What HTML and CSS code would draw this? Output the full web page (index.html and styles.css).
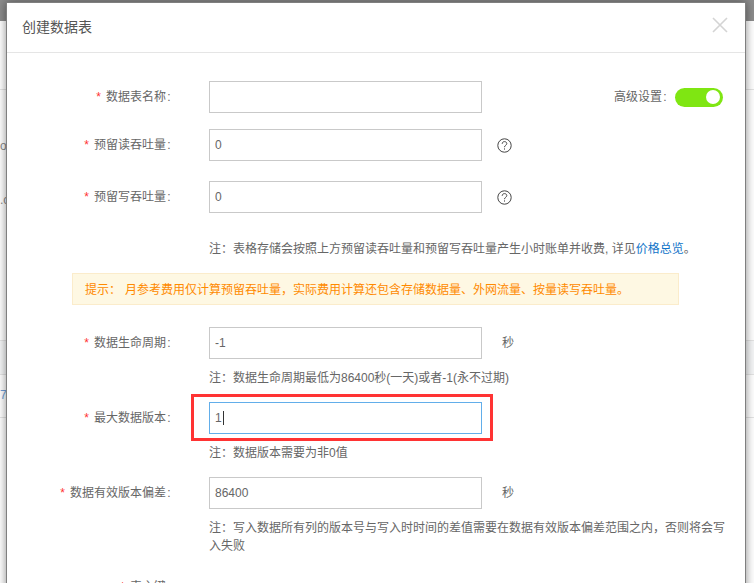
FILE: index.html
```html
<!DOCTYPE html>
<html lang="zh-CN">
<head>
<meta charset="utf-8">
<title>创建数据表</title>
<link rel="stylesheet" href="styles.css">
</head>
<body>
<div class="backdrop">
  <div class="topbar"></div>
  <div class="bg-row bg-first"></div>
  <div class="bg-text bg-or">or</div>
  <div class="bg-text bg-c">.c</div>
  <div class="bg-tint"></div>
  <div class="bg-text bg-link">7c</div>
  <div class="bg-row bg-last"></div>
</div>
<section class="modal">
  <header class="modal-head">
    <h1 class="modal-title">创建数据表</h1>
    <svg class="close" width="16" height="16" viewBox="0 0 16 16"><path d="M1 1 15 15M15 1 1 15" fill="none" stroke="#d4d4d4" stroke-width="1.6"/></svg>
  </header>
  <form class="form">
    <div class="row gap16">
      <label class="label"><i class="req">*</i>数据表名称<span class="colon">:</span></label>
      <input class="field" type="text">
      <div class="advanced">
        <span>高级设置<span class="colon">:</span></span>
        <span class="toggle"><span class="knob"></span></span>
      </div>
    </div>
    <div class="row gap20">
      <label class="label"><i class="req">*</i>预留读吞吐量<span class="colon">:</span></label>
      <input class="field" type="text" value="0">
      <svg class="help" width="15" height="15" viewBox="0 0 15 15"><circle cx="7.5" cy="7.5" r="6.7" fill="none" stroke="#444" stroke-width="1"/><path d="M5.2 5.8C5.2 4.4 6.2 3.6 7.5 3.6S9.8 4.4 9.8 5.6C9.8 7.2 7.5 7.3 7.5 9.2M7.5 10.4V11.6" fill="none" stroke="#444" stroke-width="1"/></svg>
    </div>
    <div class="row gap26">
      <label class="label"><i class="req">*</i>预留写吞吐量<span class="colon">:</span></label>
      <input class="field" type="text" value="0">
      <svg class="help" width="15" height="15" viewBox="0 0 15 15"><circle cx="7.5" cy="7.5" r="6.7" fill="none" stroke="#444" stroke-width="1"/><path d="M5.2 5.8C5.2 4.4 6.2 3.6 7.5 3.6S9.8 4.4 9.8 5.6C9.8 7.2 7.5 7.3 7.5 9.2M7.5 10.4V11.6" fill="none" stroke="#444" stroke-width="1"/></svg>
    </div>
    <p class="note">注&#xFF1A;表格存储会按照上方预留读吞吐量和预留写吞吐量产生小时账单并收费, 详见<a class="link">价格总览</a>。</p>
    <div class="alert"><span class="alert-key">提示&#xFF1A;</span>月参考费用仅计算预留吞吐量&#xFF0C;实际费用计算还包含存储数据量、外网流量、按量读写吞吐量。</div>
    <div class="row gap9">
      <label class="label"><i class="req">*</i>数据生命周期<span class="colon">:</span></label>
      <input class="field" type="text" value="-1">
      <span class="unit">秒</span>
    </div>
    <p class="note">注&#xFF1A;数据生命周期最低为86400秒(一天)或者-1(永不过期)</p>
    <div class="row gap9">
      <label class="label"><i class="req">*</i>最大数据版本<span class="colon">:</span></label>
      <div class="field focused">1<span class="caret"></span></div>
      <div class="highlight"></div>
    </div>
    <p class="note">注&#xFF1A;数据版本需要为非0值</p>
    <div class="row gap9">
      <label class="label"><i class="req">*</i>数据有效版本偏差<span class="colon">:</span></label>
      <input class="field" type="text" value="86400">
      <span class="unit">秒</span>
    </div>
    <p class="note wrap">注&#xFF1A;写入数据所有列的版本号与写入时时间的差值需要在数据有效版本偏差范围之内&#xFF0C;否则将会写入失败</p>
    <div class="row">
      <label class="label"><i class="req">*</i>表主键<span class="colon">:</span></label>
    </div>
  </form>
</section>
</body>
</html>
```
FILE: styles.css
```css
* { box-sizing: border-box; }
html, body { margin: 0; height: 100%; }
body {
  position: relative;
  width: 754px;
  height: 583px;
  overflow: hidden;
  background: #fff;
  font: 12px/18px "Liberation Sans", "Noto Sans CJK SC", sans-serif;
  color: #666;
}
.backdrop { height: 583px; }
.topbar { height: 21px; background: #8c8c8c; }
.bg-row { border-bottom: 1px solid #e4e4e4; }
.bg-first { height: 69px; }
.bg-text { font: 12px/16px "Liberation Sans", sans-serif; color: #888; white-space: nowrap; }
.bg-or { margin-top: 48px; }
.bg-c { margin-top: 38px; }
.bg-tint {
  height: 167px;
  background: linear-gradient(#fff 0 132px, #e4e4e4 132px 133px, #f5f6f7 133px);
  border-bottom: 1px solid #e4e4e4;
}
.bg-link { margin-top: 12px; color: #6f9fd8; }
.bg-last { height: 15px; }

.modal {
  position: absolute;
  left: 6px;
  top: 2px;
  width: 740px;
  height: 640px;
  background: #fff;
  border: 1px solid #7f7f7f;
  box-shadow: 0 0 9px rgba(0, 0, 0, .45);
}
.modal-head {
  display: flex;
  align-items: center;
  justify-content: space-between;
  height: 50px;
  padding: 0 17px 0 15px;
  border-bottom: 1px solid #e5e5e5;
}
.modal-title { margin: 0 0 2px; font-size: 14px; font-weight: 400; color: #555; }
.close { margin-bottom: 5px; }

.form { display: flex; flex-direction: column; padding: 28px 22px 0 0; }
.row { position: relative; display: flex; align-items: center; height: 32px; flex: none; }
.gap16 { margin-bottom: 16px; }
.gap20 { margin-bottom: 20px; }
.gap26 { margin-bottom: 26px; }
.gap9 { margin-bottom: 9px; }
.label { width: 165px; margin-right: 37px; text-align: right; flex: none; color: #666; }
.colon { display: inline-block; width: 6px; text-align: center; }
.req { margin-right: 5px; font: 12px/1 "Liberation Sans", sans-serif; color: #f33; }
.field {
  display: block;
  width: 273px;
  height: 32px;
  padding: 0 5px;
  border: 1px solid #c9c9c9;
  border-radius: 0;
  outline: 0;
  background: #fff;
  font: 12px/30px "Liberation Sans", sans-serif;
  color: #666;
  flex: none;
}
.focused { border-color: #62aeea; }
.caret { display: inline-block; width: 1px; height: 14px; margin-left: 1px; background: #333; vertical-align: -3px; }
.highlight {
  position: absolute;
  left: 184px;
  top: -8px;
  width: 302px;
  height: 47px;
  border: 3px solid #f33;
  pointer-events: none;
}
.help { margin-left: 15px; flex: none; }
.unit { margin-left: 20px; }
.advanced { display: flex; align-items: center; margin-left: auto; }
.toggle {
  display: flex;
  justify-content: flex-end;
  align-items: center;
  width: 48px;
  height: 19px;
  margin-left: 7px;
  padding-right: 3px;
  border-radius: 10px;
  background: #7fe612;
}
.knob { width: 14px; height: 14px; border-radius: 50%; background: #fff; }
.note { margin: 0 0 15px 202px; padding-top: 1px; flex: none; color: #666; white-space: nowrap; }
.wrap { width: 522px; margin-bottom: 16px; white-space: normal; }
.link { color: #0f73c8; }
.alert {
  height: 32px;
  margin: 0 0 22px 65px;
  width: 607px;
  padding-left: 12px;
  border: 1px solid #fbeccb;
  background: #fef8e3;
  color: #ff8a00;
  line-height: 32px;
  flex: none;
  white-space: nowrap;
}
.alert-key { margin-right: 4px; }
```
